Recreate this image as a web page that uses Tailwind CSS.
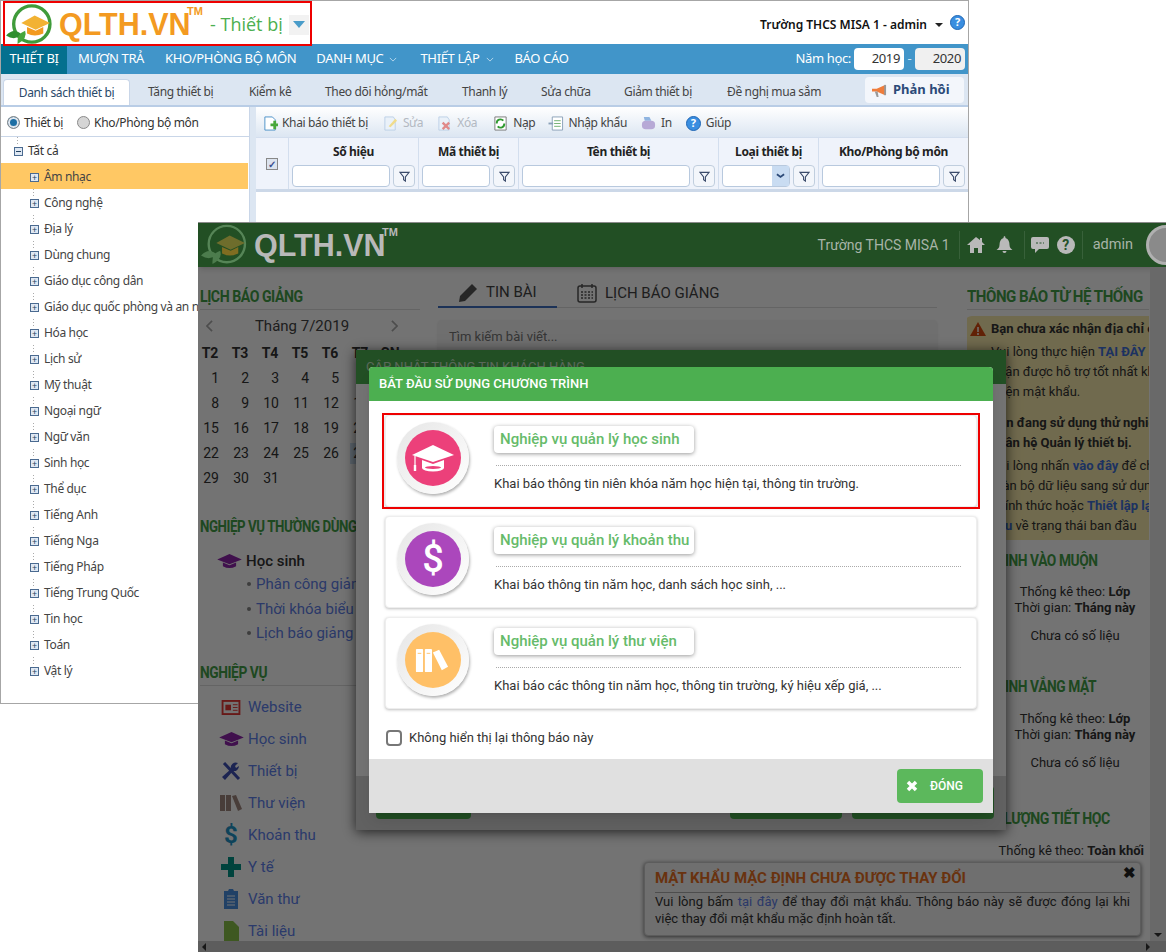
<!DOCTYPE html>
<html lang="en">
<head>
    <meta charset="UTF-8">
    <title>QLTH.VN</title>
    <script src="https://cdn.jsdelivr.net/npm/@tailwindcss/browser@4"></script>
</head>
<body class="bg-white">
<div class="relative w-[1166px] h-[952px] overflow-hidden bg-white">

    <!-- back window: Thiet bi -->
    <div class="absolute left-0 top-0 w-[969px] h-[704px] border border-[#a6a6a6] bg-white font-['Noto_Sans',sans-serif] text-[12px] tracking-[-0.35px] text-[#444] flex flex-col overflow-hidden">
        <header class="h-[43px] flex items-center pt-[4px] pl-[3px] pr-[3px] tracking-normal">
            <svg viewBox="0 0 48 44" class="w-[48px] h-[42px] shrink-0">
                <circle cx="28" cy="21" r="19" fill="none" stroke="#3f9b3a" stroke-width="3.5"/>
                <path d="M17 20 L31 12 L47 20 L32 27Z" fill="#f2b233"/>
                <path d="M23 24 L23 31 Q31 35 40 31 L40 24 L32 28Z" fill="#f29a1f"/>
                <path d="M1 33 Q9 24 18 32 Q10 39 1 33Z" fill="#2f8f2f"/>
                <path d="M13 42 Q12 31 21 28 Q24 36 13 42Z" fill="#46a63c"/>
            </svg>
            <div class="relative ml-[7px] font-['Liberation_Sans',sans-serif] font-bold text-[#f39a21] text-[30.5px] leading-none w-[151px]">QLTH.VN<span class="absolute left-[128px] top-[-3px] text-[11px]">TM</span></div>
            <span class="text-[18px] text-[#4caf50] font-['Open_Sans',sans-serif]">- Thiết bị</span>
            <span class="ml-[6px] w-[20px] h-[20px] bg-[#f2f2f2] flex items-center justify-center"><span class="w-0 h-0 border-x-[6px] border-x-transparent border-t-[7px] border-t-[#4a9cc9]"></span></span>
            <div class="ml-auto flex items-center">
                <span class="text-[12px] font-semibold text-[#111]">Trường THCS MISA 1 - admin</span>
                <span class="ml-[8px] w-0 h-0 border-x-[4px] border-x-transparent border-t-[4px] border-t-[#222]"></span>
                <span class="ml-[7px] w-[15px] h-[15px] rounded-full bg-[#3a8ee0] border border-[#1f66b5] text-white text-[11px] font-bold flex items-center justify-center mb-[4px]">?</span>
            </div>
        </header>

        <nav class="h-[30px] bg-[#4195c9] flex items-center text-white text-[13px] shrink-0">
            <a class="h-full w-[66px] bg-[#04708f] flex items-center justify-center">THIẾT BỊ</a>
            <a class="ml-[11px]">MƯỢN TRẢ</a>
            <a class="ml-[21px]">KHO/PHÒNG BỘ MÔN</a>
            <a class="ml-[20px]">DANH MỤC</a>
            <svg viewBox="0 0 10 6" class="w-[8px] h-[5px] ml-[6px]"><path d="M1 1l4 4 4-4" fill="none" stroke="#cfe4f2"/></svg>
            <a class="ml-[23px]">THIẾT LẬP</a>
            <svg viewBox="0 0 10 6" class="w-[8px] h-[5px] ml-[7px]"><path d="M1 1l4 4 4-4" fill="none" stroke="#cfe4f2"/></svg>
            <a class="ml-[20px]">BÁO CÁO</a>
            <div class="ml-auto mr-[3px] flex items-center">
                <span class="mr-[3px]">Năm học:</span>
                <span class="w-[50px] h-[22px] bg-white text-[#333] rounded-sm flex items-center justify-end pr-[4px]">2019</span>
                <span class="w-[11px] text-center text-[#cfe4f2]">-</span>
                <span class="w-[50px] h-[22px] bg-[#f0f0f0] text-[#333] rounded-sm flex items-center justify-end pr-[4px]">2020</span>
            </div>
        </nav>

        <div class="h-[33px] bg-[#dce6f2] border-b-2 border-[#b9cde6] flex items-end shrink-0 relative">
            <span class="ml-[2px] w-[127px] h-[26px] bg-white rounded-t-sm border border-b-0 border-[#c9d6e8] flex items-center justify-center text-[#2a4a6a]">Danh sách thiết bị</span>
            <span class="absolute left-[147px] top-[9px]">Tăng thiết bị</span>
            <span class="absolute left-[248px] top-[9px]">Kiểm kê</span>
            <span class="absolute left-[324px] top-[9px]">Theo dõi hỏng/mất</span>
            <span class="absolute left-[461px] top-[9px]">Thanh lý</span>
            <span class="absolute left-[540px] top-[9px]">Sửa chữa</span>
            <span class="absolute left-[623px] top-[9px]">Giảm thiết bị</span>
            <span class="absolute left-[726px] top-[9px]">Đề nghị mua sắm</span>
            <span class="absolute left-[864px] top-[3px] w-[99px] h-[26px] bg-[#f3f6fb] rounded-sm flex items-center pl-[6px] gap-[5px] font-bold text-[13px] tracking-normal text-[#2b4a78]">
                <svg viewBox="0 0 18 16" class="w-[17px] h-[15px] shrink-0"><path d="M1 6h5l9-4v11L6 9H1z" fill="#ef7d3c"/><path d="M15 2v11" stroke="#999" stroke-width="2"/><path d="M4 9l2 6h2L7 9z" fill="#999"/></svg>
                Phản hồi
            </span>
        </div>

        <div class="flex flex-1 min-h-0">
            <aside class="relative w-[249px] border-r border-[#c9d6e8] shrink-0 text-[#333]">
                <span class="absolute left-[16px] top-[30px] w-px h-[7px] bg-[repeating-linear-gradient(#aaa_0_1px,transparent_1px_3px)]"></span>
                <span class="absolute left-[32px] top-[82px] w-px h-[494px] bg-[repeating-linear-gradient(#aaa_0_1px,transparent_1px_3px,#aaa_3px_4px,transparent_4px_6px,#aaa_6px_7px,transparent_7px_26px)]"></span>
                <div class="h-[30px] border-b border-[#c9d6e8] flex items-center pl-[6px] pt-[2px]">
                    <span class="w-[13px] h-[13px] rounded-full border border-[#8a8a8a] bg-[#1d6fa5] shadow-[inset_0_0_0_2px_#dfe6ee]"></span>
                    <span class="ml-[4px]">Thiết bị</span>
                    <span class="ml-[14px] w-[13px] h-[13px] rounded-full border border-[#8a8a8a] bg-[#d5d5d5]"></span>
                    <span class="ml-[4px]">Kho/Phòng bộ môn</span>
                </div>
                <div class="h-[26px] flex items-center pl-[13px] pt-[2px]"><span class="w-[9px] h-[9px] border border-[#4a6a90] bg-[#dfe8f3] flex items-center justify-center"><span class="w-[5px] h-px bg-[#22415f]"></span></span><span class="ml-[5px]">Tất cả</span></div>
                <div class="text-[#444]">
                    <div class="h-[26px] flex items-center pl-[29px] pt-[2px] bg-[#ffc864] mr-px"><span class="relative w-[9px] h-[9px] border border-[#4a6a90] bg-[#dfe8f3] flex items-center justify-center text-[9px] leading-none text-[#22415f]">+</span><span class="ml-[5px]">Âm nhạc</span></div>
                    <div class="h-[26px] flex items-center pl-[29px] pt-[2px]"><span class="w-[9px] h-[9px] border border-[#4a6a90] bg-[#dfe8f3] flex items-center justify-center text-[9px] leading-none text-[#22415f]">+</span><span class="ml-[5px]">Công nghệ</span></div>
                    <div class="h-[26px] flex items-center pl-[29px] pt-[2px]"><span class="w-[9px] h-[9px] border border-[#4a6a90] bg-[#dfe8f3] flex items-center justify-center text-[9px] leading-none text-[#22415f]">+</span><span class="ml-[5px]">Địa lý</span></div>
                    <div class="h-[26px] flex items-center pl-[29px] pt-[2px]"><span class="w-[9px] h-[9px] border border-[#4a6a90] bg-[#dfe8f3] flex items-center justify-center text-[9px] leading-none text-[#22415f]">+</span><span class="ml-[5px]">Dùng chung</span></div>
                    <div class="h-[26px] flex items-center pl-[29px] pt-[2px]"><span class="w-[9px] h-[9px] border border-[#4a6a90] bg-[#dfe8f3] flex items-center justify-center text-[9px] leading-none text-[#22415f]">+</span><span class="ml-[5px]">Giáo dục công dân</span></div>
                    <div class="h-[26px] flex items-center pl-[29px] pt-[2px]"><span class="w-[9px] h-[9px] border border-[#4a6a90] bg-[#dfe8f3] flex items-center justify-center text-[9px] leading-none text-[#22415f]">+</span><span class="ml-[5px] whitespace-nowrap">Giáo dục quốc phòng và an ninh</span></div>
                    <div class="h-[26px] flex items-center pl-[29px] pt-[2px]"><span class="w-[9px] h-[9px] border border-[#4a6a90] bg-[#dfe8f3] flex items-center justify-center text-[9px] leading-none text-[#22415f]">+</span><span class="ml-[5px]">Hóa học</span></div>
                    <div class="h-[26px] flex items-center pl-[29px] pt-[2px]"><span class="w-[9px] h-[9px] border border-[#4a6a90] bg-[#dfe8f3] flex items-center justify-center text-[9px] leading-none text-[#22415f]">+</span><span class="ml-[5px]">Lịch sử</span></div>
                    <div class="h-[26px] flex items-center pl-[29px] pt-[2px]"><span class="w-[9px] h-[9px] border border-[#4a6a90] bg-[#dfe8f3] flex items-center justify-center text-[9px] leading-none text-[#22415f]">+</span><span class="ml-[5px]">Mỹ thuật</span></div>
                    <div class="h-[26px] flex items-center pl-[29px] pt-[2px]"><span class="w-[9px] h-[9px] border border-[#4a6a90] bg-[#dfe8f3] flex items-center justify-center text-[9px] leading-none text-[#22415f]">+</span><span class="ml-[5px]">Ngoại ngữ</span></div>
                    <div class="h-[26px] flex items-center pl-[29px] pt-[2px]"><span class="w-[9px] h-[9px] border border-[#4a6a90] bg-[#dfe8f3] flex items-center justify-center text-[9px] leading-none text-[#22415f]">+</span><span class="ml-[5px]">Ngữ văn</span></div>
                    <div class="h-[26px] flex items-center pl-[29px] pt-[2px]"><span class="w-[9px] h-[9px] border border-[#4a6a90] bg-[#dfe8f3] flex items-center justify-center text-[9px] leading-none text-[#22415f]">+</span><span class="ml-[5px]">Sinh học</span></div>
                    <div class="h-[26px] flex items-center pl-[29px] pt-[2px]"><span class="w-[9px] h-[9px] border border-[#4a6a90] bg-[#dfe8f3] flex items-center justify-center text-[9px] leading-none text-[#22415f]">+</span><span class="ml-[5px]">Thể dục</span></div>
                    <div class="h-[26px] flex items-center pl-[29px] pt-[2px]"><span class="w-[9px] h-[9px] border border-[#4a6a90] bg-[#dfe8f3] flex items-center justify-center text-[9px] leading-none text-[#22415f]">+</span><span class="ml-[5px]">Tiếng Anh</span></div>
                    <div class="h-[26px] flex items-center pl-[29px] pt-[2px]"><span class="w-[9px] h-[9px] border border-[#4a6a90] bg-[#dfe8f3] flex items-center justify-center text-[9px] leading-none text-[#22415f]">+</span><span class="ml-[5px]">Tiếng Nga</span></div>
                    <div class="h-[26px] flex items-center pl-[29px] pt-[2px]"><span class="w-[9px] h-[9px] border border-[#4a6a90] bg-[#dfe8f3] flex items-center justify-center text-[9px] leading-none text-[#22415f]">+</span><span class="ml-[5px]">Tiếng Pháp</span></div>
                    <div class="h-[26px] flex items-center pl-[29px] pt-[2px]"><span class="w-[9px] h-[9px] border border-[#4a6a90] bg-[#dfe8f3] flex items-center justify-center text-[9px] leading-none text-[#22415f]">+</span><span class="ml-[5px]">Tiếng Trung Quốc</span></div>
                    <div class="h-[26px] flex items-center pl-[29px] pt-[2px]"><span class="w-[9px] h-[9px] border border-[#4a6a90] bg-[#dfe8f3] flex items-center justify-center text-[9px] leading-none text-[#22415f]">+</span><span class="ml-[5px]">Tin học</span></div>
                    <div class="h-[26px] flex items-center pl-[29px] pt-[2px]"><span class="w-[9px] h-[9px] border border-[#4a6a90] bg-[#dfe8f3] flex items-center justify-center text-[9px] leading-none text-[#22415f]">+</span><span class="ml-[5px]">Toán</span></div>
                    <div class="h-[26px] flex items-center pl-[29px] pt-[2px]"><span class="w-[9px] h-[9px] border border-[#4a6a90] bg-[#dfe8f3] flex items-center justify-center text-[9px] leading-none text-[#22415f]">+</span><span class="ml-[5px]">Vật lý</span></div>
                </div>
            </aside>
            <div class="w-[6px] bg-[#dce6f2] shrink-0"></div>
            <main class="flex-1 min-w-0">
                <div class="h-[30px] bg-gradient-to-b from-white to-[#dce6f2] flex items-center pl-[7px] pt-[2px]">
                    <svg viewBox="0 0 16 16" class="w-[15px] h-[15px]"><path d="M2 1h8l3 3v11H2z" fill="#fff" stroke="#4a90c8"/><path d="M8 8h3V5h3v3h2v3h-2v3h-3v-3H8z" fill="#47a83a"/></svg>
                    <span class="ml-[4px]">Khai báo thiết bị</span>
                    <svg viewBox="0 0 16 16" class="ml-[15px] w-[15px] h-[15px]"><path d="M2 1h9l2 3v11H2z" fill="#eaf1f9" stroke="#bcd0e6"/><path d="M6 11l7-8 2 2-7 7z" fill="#f0dc8c"/></svg>
                    <span class="ml-[5px] text-[#b3b9c2]">Sửa</span>
                    <svg viewBox="0 0 16 16" class="ml-[14px] w-[15px] h-[15px]"><path d="M2 1h9l2 3v11H2z" fill="#eaf1f9" stroke="#bcd0e6"/><path d="M6 7l7 7M13 7l-7 7" stroke="#e08a8a" stroke-width="2.5"/></svg>
                    <span class="ml-[5px] text-[#b3b9c2]">Xóa</span>
                    <svg viewBox="0 0 16 16" class="ml-[16px] w-[15px] h-[15px]"><path d="M2 1h12v14H2z" fill="#fff" stroke="#777"/><path d="M11 5A4 4 0 0 0 4 8M5 11a4 4 0 0 0 7-3" fill="none" stroke="#2f9a2f" stroke-width="2"/></svg>
                    <span class="ml-[5px]">Nạp</span>
                    <svg viewBox="0 0 16 16" class="ml-[13px] w-[16px] h-[15px]"><path d="M4 1h11v14H4z" fill="#fff" stroke="#8aa0b8"/><path d="M6 5h7M6 8h7M6 11h7" stroke="#6fae6f"/><path d="M0 8h5" stroke="#8aa0b8" stroke-width="2"/></svg>
                    <span class="ml-[4px]">Nhập khẩu</span>
                    <svg viewBox="0 0 16 16" class="ml-[14px] w-[15px] h-[15px]"><path d="M3 1h6l2 4H4z" fill="#8fb4e0"/><rect x="1" y="5" width="14" height="9" rx="4" fill="#b7a9d6"/></svg>
                    <span class="ml-[5px]">In</span>
                    <span class="ml-[14px] w-[15px] h-[15px] rounded-full bg-[#3a8ee0] border border-[#1f66b5] text-white text-[11px] font-bold flex items-center justify-center">?</span>
                    <span class="ml-[5px]">Giúp</span>
                </div>
                <div class="h-[55px] bg-[#eff3fb] border-y border-[#d3deee] border-b-[3px] border-b-[#ccd8e8] flex text-[#222] font-bold">
                    <div class="w-[33px] border-r border-[#d3deee] flex items-center justify-center"><span class="w-[12px] h-[12px] border border-[#888] bg-[#dce3ee] text-[#3a4f90] text-[10px] leading-none flex items-center justify-center">✓</span></div>
                    <div class="w-[130px] border-r border-[#d3deee] flex flex-col items-center pt-[5px] px-[3px]">
                        <span>Số hiệu</span>
                        <div class="mt-[4px] flex gap-[3px] w-full"><span class="flex-1 h-[22px] bg-white border border-[#b8c9de] rounded-sm"></span><span class="w-[22px] h-[22px] bg-[#f3f6fb] border border-[#c0cede] rounded-sm flex items-center justify-center"><svg viewBox="0 0 12 12" class="w-[11px] h-[11px]"><path d="M1 1.5h10L7 6.5V11L5 9.5v-3z" fill="none" stroke="#3a4a6a" stroke-width="1.2"/></svg></span></div>
                    </div>
                    <div class="w-[100px] border-r border-[#d3deee] flex flex-col items-center pt-[5px] px-[3px]">
                        <span>Mã thiết bị</span>
                        <div class="mt-[4px] flex gap-[3px] w-full"><span class="flex-1 h-[22px] bg-white border border-[#b8c9de] rounded-sm"></span><span class="w-[22px] h-[22px] bg-[#f3f6fb] border border-[#c0cede] rounded-sm flex items-center justify-center"><svg viewBox="0 0 12 12" class="w-[11px] h-[11px]"><path d="M1 1.5h10L7 6.5V11L5 9.5v-3z" fill="none" stroke="#3a4a6a" stroke-width="1.2"/></svg></span></div>
                    </div>
                    <div class="w-[200px] border-r border-[#d3deee] flex flex-col items-center pt-[5px] px-[3px]">
                        <span>Tên thiết bị</span>
                        <div class="mt-[4px] flex gap-[3px] w-full"><span class="flex-1 h-[22px] bg-white border border-[#b8c9de] rounded-sm"></span><span class="w-[22px] h-[22px] bg-[#f3f6fb] border border-[#c0cede] rounded-sm flex items-center justify-center"><svg viewBox="0 0 12 12" class="w-[11px] h-[11px]"><path d="M1 1.5h10L7 6.5V11L5 9.5v-3z" fill="none" stroke="#3a4a6a" stroke-width="1.2"/></svg></span></div>
                    </div>
                    <div class="w-[100px] border-r border-[#d3deee] flex flex-col items-center pt-[5px] px-[3px]">
                        <span>Loại thiết bị</span>
                        <div class="mt-[4px] flex gap-[3px] w-full"><span class="flex-1 h-[22px] bg-white border border-[#b8c9de] rounded-sm flex justify-end"><span class="w-[17px] h-full bg-[#c9dcf2] flex items-center justify-center"><svg viewBox="0 0 10 6" class="w-[9px] h-[6px]"><path d="M1 1l4 3 4-3" fill="none" stroke="#2c4a78" stroke-width="2"/></svg></span></span><span class="w-[22px] h-[22px] bg-[#f3f6fb] border border-[#c0cede] rounded-sm flex items-center justify-center"><svg viewBox="0 0 12 12" class="w-[11px] h-[11px]"><path d="M1 1.5h10L7 6.5V11L5 9.5v-3z" fill="none" stroke="#3a4a6a" stroke-width="1.2"/></svg></span></div>
                    </div>
                    <div class="flex-1 flex flex-col items-center pt-[5px] px-[3px]">
                        <span>Kho/Phòng bộ môn</span>
                        <div class="mt-[4px] flex gap-[3px] w-full"><span class="flex-1 h-[22px] bg-white border border-[#b8c9de] rounded-sm"></span><span class="w-[22px] h-[22px] bg-[#f3f6fb] border border-[#c0cede] rounded-sm flex items-center justify-center"><svg viewBox="0 0 12 12" class="w-[11px] h-[11px]"><path d="M1 1.5h10L7 6.5V11L5 9.5v-3z" fill="none" stroke="#3a4a6a" stroke-width="1.2"/></svg></span></div>
                    </div>
                </div>
            </main>
        </div>
        <span class="absolute left-[2px] top-0 w-[309px] h-[45px] border-2 border-[#ee0000] pointer-events-none"></span>
    </div>

    <!-- front window: QLTH dashboard with dialogs -->
    <div class="absolute left-[198px] top-[222px] w-[968px] h-[730px] bg-white border-t border-[#8a8a8a] overflow-hidden font-['Roboto',sans-serif] text-[#333] flex flex-col">
        <header class="h-[44px] bg-[#4caf50] shadow-md flex items-center text-white shrink-0">
            <svg viewBox="0 0 48 44" class="w-[48px] h-[42px] ml-[1px] shrink-0 relative z-10 opacity-70">
                <circle cx="28" cy="21" r="19" fill="none" stroke="#6d9c6d" stroke-width="2.5"/>
                <path d="M17 20 L31 12 L47 20 L32 27Z" fill="#8f7a30"/>
                <path d="M23 24 L23 31 Q31 35 40 31 L40 24 L32 28Z" fill="#a87a20"/>
                <path d="M1 33 Q9 24 18 32 Q10 39 1 33Z" fill="#5f8f5f"/>
                <path d="M13 42 Q12 31 21 28 Q24 36 13 42Z" fill="#5f8f5f"/>
            </svg>
            <div class="relative z-10 ml-[7px] font-['Liberation_Sans',sans-serif] font-bold text-[30.5px] leading-none text-[#b9b9b9]">QLTH.VN<span class="absolute left-[128px] top-[-3px] text-[11px]">TM</span></div>
            <div class="relative z-10 ml-auto flex items-center pr-[2px] text-[#a8b4a8]">
                <span class="text-[14px]">Trường THCS MISA 1</span>
                <span class="ml-[9px] w-px h-[28px] bg-white/10"></span>
                <svg viewBox="0 0 18 16" class="ml-[7px] w-[18px] h-[16px]"><path d="M9 0L0 8h3v8h4v-5h4v5h4V8h3l-3-3V1h-2v2z" fill="#b9b9b9"/></svg>
                <svg viewBox="0 0 16 18" class="ml-[11px] w-[17px] h-[18px]"><path d="M8 0a2 2 0 0 0-1 2C4 3 3 6 3 9c0 3-2 4-3 5h16c-1-1-3-2-3-5 0-3-1-6-4-7a2 2 0 0 0-1-2zM6 15a2 2 0 0 0 4 0z" fill="#b9b9b9"/></svg>
                <span class="ml-[11px] w-px h-[28px] bg-white/10"></span>
                <svg viewBox="0 0 18 16" class="ml-[6px] w-[18px] h-[16px]"><path d="M2 0h14a2 2 0 0 1 2 2v8a2 2 0 0 1-2 2H8l-4 4v-4H2a2 2 0 0 1-2-2V2a2 2 0 0 1 2-2z" fill="#b9b9b9"/><path d="M5 6h8" stroke="#25522a" stroke-dasharray="2 1.5"/></svg>
                <span class="ml-[8px] w-[18px] h-[18px] rounded-full bg-[#b9b9b9] text-[#25522a] text-[14px] font-bold flex items-center justify-center">?</span>
                <span class="ml-[7px] w-px h-[28px] bg-white/10"></span>
                <span class="ml-[10px] text-[14.5px]">admin</span>
                <span class="ml-[13px] w-[40px] h-[40px] rounded-full bg-[#8a8a8a] border-[3px] border-[#b0b0b0] mr-[-22px]"></span>
            </div>
        </header>

        <div class="flex flex-1 min-h-0">
            <div class="flex-1 flex min-w-0">
                <!-- left column -->
                <section class="w-[220px] ml-[2px] shrink-0">
                    <h2 class="mt-[20px] h-[21px] border-b border-[#ddd] font-bold text-[16px] leading-[20px] tracking-[-0.5px] text-[#43a047] box-content pb-[1px] whitespace-nowrap"><span class="inline-block origin-left scale-x-[0.88]">LỊCH BÁO GIẢNG</span></h2>
                    <div class="mt-[4px] h-[24px] flex items-center justify-between px-[6px] text-[#bbb]">
                        <svg viewBox="0 0 8 14" class="w-[7px] h-[12px]"><path d="M7 1L1 7l6 6" fill="none" stroke="#aaa" stroke-width="2"/></svg>
                        <span class="text-[15px] text-[#444]">Tháng 7/2019</span>
                        <svg viewBox="0 0 8 14" class="w-[7px] h-[12px] mr-[16px]"><path d="M1 1l6 6-6 6" fill="none" stroke="#aaa" stroke-width="2"/></svg>
                    </div>
                    <div class="mt-[3px] grid grid-cols-[repeat(7,30px)] auto-rows-[25px] items-center text-[14px] text-[#333]">
                        <b class="text-center pr-[10px]">T2</b><b class="text-center pr-[10px]">T3</b><b class="text-center pr-[10px]">T4</b><b class="text-center pr-[10px]">T5</b><b class="text-center pr-[10px]">T6</b><b class="text-center pr-[10px]">T7</b><b class="text-center pr-[10px]">CN</b>
                        <span class="text-right pr-[11px]">1</span><span class="text-right pr-[11px]">2</span><span class="text-right pr-[11px]">3</span><span class="text-right pr-[11px]">4</span><span class="text-right pr-[11px]">5</span><span class="text-right pr-[11px]">6</span><span class="text-right pr-[11px]">7</span>
                        <span class="text-right pr-[11px]">8</span><span class="text-right pr-[11px]">9</span><span class="text-right pr-[11px]">10</span><span class="text-right pr-[11px]">11</span><span class="text-right pr-[11px]">12</span><span class="text-right pr-[11px]">13</span><span class="text-right pr-[11px]">14</span>
                        <span class="text-right pr-[11px]">15</span><span class="text-right pr-[11px]">16</span><span class="text-right pr-[11px]">17</span><span class="text-right pr-[11px]">18</span><span class="text-right pr-[11px]">19</span><span class="text-right pr-[11px]">20</span><span class="text-right pr-[11px]">21</span>
                        <span class="text-right pr-[11px]">22</span><span class="text-right pr-[11px]">23</span><span class="text-right pr-[11px]">24</span><span class="text-right pr-[11px]">25</span><span class="text-right pr-[11px]">26</span><span class="text-right pr-[11px] bg-[#cfe2f5]">27</span><span class="text-right pr-[11px]">28</span>
                        <span class="text-right pr-[11px]">29</span><span class="text-right pr-[11px]">30</span><span class="text-right pr-[11px]">31</span>
                    </div>
                    <h2 class="mt-[26px] font-bold text-[16px] leading-[20px] tracking-[-0.5px] text-[#43a047] whitespace-nowrap"><span class="inline-block origin-left scale-x-[0.83]">NGHIỆP VỤ THƯỜNG DÙNG</span></h2>
                    <div class="mt-[14px] ml-[16px] h-[20px] flex items-center font-medium text-[15px]">
                        <svg viewBox="0 0 28 18" class="w-[27px] h-[17px]"><path d="M14 1L1 7l13 5 13-5z" fill="#8e24aa"/><path d="M7 10v4q7 4 14 0v-4l-7 3z" fill="#8e24aa"/></svg>
                        <span class="ml-[3px]">Học sinh</span>
                    </div>
                    <ul class="mt-[1px] ml-[56px] text-[15px] text-[#5f7fe8] whitespace-nowrap relative">
                        <li class="h-[25px] leading-[25px] relative">Phân công giảng dạy<span class="absolute left-[-9px] top-[10px] w-[4px] h-[4px] rounded-full bg-[#888]"></span></li>
                        <li class="h-[24px] leading-[24px] relative">Thời khóa biểu<span class="absolute left-[-9px] top-[10px] w-[4px] h-[4px] rounded-full bg-[#888]"></span></li>
                        <li class="h-[25px] leading-[25px] relative">Lịch báo giảng<span class="absolute left-[-9px] top-[10px] w-[4px] h-[4px] rounded-full bg-[#888]"></span></li>
                    </ul>
                    <h2 class="mt-[17px] h-[21px] border-b border-[#ddd] font-bold text-[16px] leading-[20px] tracking-[-0.5px] text-[#43a047] box-content pb-[1px] whitespace-nowrap"><span class="inline-block origin-left scale-x-[0.86]">NGHIỆP VỤ</span></h2>
                    <ul class="mt-[5px] text-[15px] text-[#6082ee]">
                        <li class="h-[32px] flex items-center"><span class="w-[48px] flex justify-center pl-[14px]"><svg viewBox="0 0 20 16" class="w-[20px] h-[15px]"><rect x="1" y="1" width="18" height="14" fill="none" stroke="#e53935" stroke-width="2"/><rect x="4" y="5" width="6" height="6" fill="#e53935"/><path d="M12 5h5M12 8h5M12 11h5" stroke="#e53935"/></svg></span>Website</li>
                        <li class="h-[32px] flex items-center"><span class="w-[48px] flex justify-center pl-[14px]"><svg viewBox="0 0 28 18" class="w-[27px] h-[17px]"><path d="M14 1L1 7l13 5 13-5z" fill="#8e24aa"/><path d="M7 10v4q7 4 14 0v-4l-7 3z" fill="#8e24aa"/></svg></span>Học sinh</li>
                        <li class="h-[32px] flex items-center"><span class="w-[48px] flex justify-center pl-[14px]"><svg viewBox="0 0 20 20" class="w-[20px] h-[20px]"><path d="M3 2l15 16" stroke="#3f51b5" stroke-width="3"/><path d="M17 2l-3 3 1 2 3-2a5 5 0 0 1-6 5L4 19l-3-3 9-8a5 5 0 0 1 7-6z" fill="#3f51b5"/></svg></span>Thiết bị</li>
                        <li class="h-[32px] flex items-center"><span class="w-[48px] flex justify-center pl-[14px]"><svg viewBox="0 0 22 16" class="w-[22px] h-[16px]"><rect x="0" y="0" width="5" height="16" fill="#a1887f"/><rect x="6" y="0" width="5" height="16" fill="#a1887f"/><path d="M12 1l4-1 6 14-4 2z" fill="#a1887f"/></svg></span>Thư viện</li>
                        <li class="h-[32px] flex items-center"><span class="w-[48px] flex justify-center pl-[14px] text-[24px] font-bold text-[#2196c8]">$</span>Khoản thu</li>
                        <li class="h-[32px] flex items-center"><span class="w-[48px] flex justify-center pl-[14px]"><svg viewBox="0 0 20 20" class="w-[20px] h-[20px]"><path d="M7 0h6v7h7v6h-7v7H7v-7H0V7h7z" fill="#009688"/></svg></span>Y tế</li>
                        <li class="h-[32px] flex items-center"><span class="w-[48px] flex justify-center pl-[14px]"><svg viewBox="0 0 16 20" class="w-[16px] h-[20px]"><path d="M1 2h4l1-2h4l1 2h4v18H1z" fill="#4a90e2"/><path d="M4 7h8M4 10h8M4 13h8M4 16h8" stroke="#fff"/></svg></span>Văn thư</li>
                        <li class="h-[32px] flex items-center"><span class="w-[48px] flex justify-center pl-[14px]"><svg viewBox="0 0 15 20" class="w-[15px] h-[20px]"><path d="M0 0h9l6 6v14H0z" fill="#8bc34a"/></svg></span>Tài liệu</li>
                    </ul>
                </section>

                <!-- middle column -->
                <section class="w-[499px] ml-[18px] shrink-0">
                    <div class="mt-[11px] h-[30px] border-b border-[#ddd] flex text-[15px] text-[#444]">
                        <div class="w-[119px] h-[30px] border-b-2 border-[#3f6fc0] flex items-center pl-[20px] pt-[1px]">
                            <svg viewBox="0 0 20 20" class="w-[20px] h-[20px]"><path d="M14 1l5 5L7 18l-6 1 1-6z" fill="#555"/></svg>
                            <span class="ml-[8px]">TIN BÀI</span>
                        </div>
                        <div class="flex items-center ml-[20px] pt-[1px]">
                            <svg viewBox="0 0 20 20" class="w-[20px] h-[20px]"><rect x="1" y="3" width="18" height="16" rx="2" fill="none" stroke="#555" stroke-width="1.5"/><path d="M5 1v4M15 1v4" stroke="#555" stroke-width="1.5"/><path d="M4 9h12M4 12h12M4 15h12" stroke="#555" stroke-width="1.5" stroke-dasharray="2 1.5"/></svg>
                            <span class="ml-[8px]">LỊCH BÁO GIẢNG</span>
                        </div>
                    </div>
                    <div class="mt-[12px] h-[60px] bg-[#f5f5f5] rounded shadow pl-[11px] pt-[7px] text-[13px] text-[#777]">Tìm kiếm bài viết...</div>
                </section>

                <!-- right column -->
                <section class="w-[182px] ml-[30px] shrink-0 overflow-hidden text-[13px] text-[#333]">
                    <h2 class="mt-[20px] h-[21px] border-b border-[#ddd] font-bold text-[16px] leading-[20px] tracking-[-0.5px] text-[#43a047] whitespace-nowrap box-content pb-[1px]"><span class="inline-block origin-left scale-x-[0.94]">THÔNG BÁO TỪ HỆ THỐNG</span></h2>
                    <div class="mt-[6px] h-[224px] ml-[-3px] pl-[6px] bg-[#f9ebad] rounded-tl-lg whitespace-nowrap leading-[20px]">
                        <div class="pt-[3px] h-[23px] flex items-center font-bold">
                            <svg viewBox="0 0 16 14" class="w-[16px] h-[14px] shrink-0"><path d="M8 0l8 14H0z" fill="#d84b0f"/><path d="M8 5v5M8 11v2" stroke="#fff" stroke-width="1.5"/></svg>
                            <span class="ml-[5px]">Bạn chưa xác nhận địa chỉ email</span>
                        </div>
                        <p class="mt-[3px] pl-[21px]">Vui lòng thực hiện <b class="text-[#3f6fd8]">TẠI ĐÂY</b></p>
                        <p class="pl-[21px]">nhận được hỗ trợ tốt nhất khi</p>
                        <p class="pl-[21px]">thiện mật khẩu.</p>
                        <p class="mt-[11px] pl-[21px] font-bold">Bạn đang sử dụng thử nghiệm</p>
                        <p class="pl-[21px] font-bold">phân hệ Quản lý thiết bị.</p>
                        <p class="mt-[3px] pl-[21px]">Vui lòng nhấn <b class="text-[#3f6fd8]">vào đây</b> để chuyển</p>
                        <p class="pl-[21px]">toàn bộ dữ liệu sang sử dụng</p>
                        <p class="pl-[21px]">chính thức hoặc <b class="text-[#3f6fd8]">Thiết lập lại</b></p>
                        <p class="pl-[21px]"><b class="text-[#3f6fd8]">liệu</b> về trạng thái ban đầu</p>
                    </div>
                    <h2 class="mt-[11px] font-bold text-[16px] leading-[20px] tracking-[-0.5px] text-[#43a047] whitespace-nowrap"><span class="inline-block origin-left scale-x-[0.86]">HỌC SINH VÀO MUỘN</span></h2>
                    <div class="mt-[13px] text-center leading-[16px] pl-[34px]">
                        <p>Thống kê theo: <b>Lớp</b></p>
                        <p>Thời gian: <b>Tháng này</b></p>
                        <p class="mt-[12px]">Chưa có số liệu</p>
                    </div>
                    <h2 class="mt-[33px] font-bold text-[16px] leading-[20px] tracking-[-0.5px] text-[#43a047] whitespace-nowrap"><span class="inline-block origin-left scale-x-[0.86]">HỌC SINH VẮNG MẶT</span></h2>
                    <div class="mt-[14px] text-center leading-[16px] pl-[34px]">
                        <p>Thống kê theo: <b>Lớp</b></p>
                        <p>Thời gian: <b>Tháng này</b></p>
                        <p class="mt-[12px]">Chưa có số liệu</p>
                    </div>
                    <h2 class="mt-[38px] font-bold text-[16px] leading-[20px] tracking-[-0.5px] text-[#43a047] whitespace-nowrap pl-[37px]"><span class="inline-block origin-left scale-x-[0.88]">LƯỢNG TIẾT HỌC</span></h2>
                    <p class="mt-[12px] pr-[5px] text-right whitespace-nowrap">Thống kê theo: <b>Toàn khối</b></p>
                </section>
            </div>
            <!-- vertical scrollbar -->
            <div class="w-[16px] bg-[#e8e8e8] shrink-0 flex flex-col items-center justify-end pb-[4px]"><span class="w-0 h-0 border-x-[4px] border-x-transparent border-t-[4px] border-t-[#333]"></span></div>
        </div>
        <!-- horizontal scrollbar -->
        <div class="h-[11px] bg-[#cfcfcf] shrink-0 flex items-center justify-between px-[4px]">
            <span class="w-0 h-0 border-y-[4px] border-y-transparent border-r-[4px] border-r-[#333]"></span>
            <span class="w-0 h-0 border-y-[4px] border-y-transparent border-l-[4px] border-l-[#333] mr-[12px]"></span>
        </div>

        <!-- toast -->
        <div class="absolute left-[446px] top-[639px] w-[497px] h-[74px] bg-[#f5f5f5] border border-[#ccc] rounded-sm shadow-[0_1px_4px_rgba(0,0,0,.6)] px-[10px] pt-[3px] text-[13px]">
            <div class="h-[27px] border-b border-[#aaa] font-bold text-[15px] leading-[25px] text-[#e8701f] relative whitespace-nowrap">MẬT KHẨU MẶC ĐỊNH CHƯA ĐƯỢC THAY ĐỔI<span class="absolute right-[-6px] top-[-5px] text-[#222] text-[15px]">✖</span></div>
            <p class="leading-[17px] text-justify">Vui lòng bấm <span class="text-[#5f7fe8]">tại đây</span> để thay đổi mật khẩu. Thông báo này sẽ được đóng lại khi việc thay đổi mật khẩu mặc định hoàn tất.</p>
        </div>

        <!-- dialog behind the overlay -->
        <div class="absolute left-[158px] top-[127px] w-[650px] h-[480px] bg-white shadow-[0_2px_12px_rgba(0,0,0,.7)] flex flex-col">
            <div class="h-[34px] bg-[#4caf50] text-white/70 text-[13px] leading-[34px] pl-[10px] shrink-0">CẬP NHẬT THÔNG TIN KHÁCH HÀNG</div>
            <div class="flex-1"></div>
            <div class="h-[54px] bg-[#d8d8d8] flex items-start pt-[10px] pl-[20px] pr-[12px]">
                <span class="w-[95px] h-[33px] bg-[#4caf50] rounded-sm"></span>
                <span class="ml-auto w-[112px] h-[33px] bg-[#4caf50] rounded-sm"></span>
                <span class="ml-[10px] w-[142px] h-[33px] bg-[#4caf50] rounded-sm"></span>
            </div>
        </div>

        <div class="absolute inset-0 bg-black/55"></div>

        <!-- start dialog -->
        <div class="absolute z-20 left-[171px] top-[144px] w-[624px] h-[446px] bg-white rounded-t-sm flex flex-col shadow-lg">
            <div class="h-[34px] bg-[#4caf50] rounded-t-sm text-white text-[13px] font-medium leading-[34px] pl-[10px] shrink-0">BẮT ĐẦU SỬ DỤNG CHƯƠNG TRÌNH</div>
            <div class="flex-1 px-[16px] pt-[14px] text-[13px] text-[#333]">

                <div class="relative h-[92px] bg-white rounded border border-[#eee] shadow-[0_1px_3px_rgba(0,0,0,.25)] flex">
                    <span class="absolute left-[-4px] top-[-3px] right-[-4px] bottom-[-3px] border-2 border-[#ee0000]"></span>
                    <div class="ml-[11px] mt-[6px] w-[72px] h-[72px] rounded-full bg-gradient-to-br from-[#e6e6e6] to-white shadow-[1px_2px_3px_rgba(0,0,0,.3)] flex items-center justify-center shrink-0">
                        <span class="w-[56px] h-[56px] rounded-full bg-[#ec407a] flex items-center justify-center">
                            <svg viewBox="0 0 42 27" class="w-[42px] h-[27px]"><path d="M21 0L42 10 21 17 0 10z" fill="#fff"/><path d="M10 15L21 19 32 15V23A11 3.5 0 0 1 10 23z" fill="#fff"/><ellipse cx="21" cy="22.5" rx="8" ry="1.5" fill="#ec407a"/><path d="M3 11V20" stroke="#fff" stroke-width="1.2"/><rect x="1.8" y="20" width="2.4" height="6" fill="#fff"/></svg>
                        </span>
                    </div>
                    <div class="ml-[25px] flex-1 pr-[15px] pt-[10px]">
                        <h3 class="w-[200px] h-[27px] bg-white rounded-sm shadow-[0_1px_4px_rgba(0,0,0,.4)] pl-[6px] text-[15px] font-medium leading-[26px] text-[#66bb6a] whitespace-nowrap">Nghiệp vụ quản lý học sinh</h3>
                        <div class="mt-[12px] ml-[2px] border-t border-dotted border-[#aaa]"></div>
                        <p class="mt-[8px] whitespace-nowrap">Khai báo thông tin niên khóa năm học hiện tại, thông tin trường.</p>
                    </div>
                </div>

                <div class="mt-[9px] h-[92px] bg-white rounded border border-[#eee] shadow-[0_1px_3px_rgba(0,0,0,.25)] flex">
                    <div class="ml-[11px] mt-[6px] w-[72px] h-[72px] rounded-full bg-gradient-to-br from-[#e6e6e6] to-white shadow-[1px_2px_3px_rgba(0,0,0,.3)] flex items-center justify-center shrink-0">
                        <span class="w-[56px] h-[56px] rounded-full bg-[#ab47bc] flex items-center justify-center text-white text-[38px] font-medium leading-none">$</span>
                    </div>
                    <div class="ml-[25px] flex-1 pr-[15px] pt-[10px]">
                        <h3 class="w-[200px] h-[27px] bg-white rounded-sm shadow-[0_1px_4px_rgba(0,0,0,.4)] pl-[6px] text-[15px] font-medium leading-[26px] text-[#66bb6a] whitespace-nowrap">Nghiệp vụ quản lý khoản thu</h3>
                        <div class="mt-[12px] ml-[2px] border-t border-dotted border-[#aaa]"></div>
                        <p class="mt-[8px] whitespace-nowrap">Khai báo thông tin năm học, danh sách học sinh, ...</p>
                    </div>
                </div>

                <div class="mt-[9px] h-[92px] bg-white rounded border border-[#eee] shadow-[0_1px_3px_rgba(0,0,0,.25)] flex">
                    <div class="ml-[11px] mt-[6px] w-[72px] h-[72px] rounded-full bg-gradient-to-br from-[#e6e6e6] to-white shadow-[1px_2px_3px_rgba(0,0,0,.3)] flex items-center justify-center shrink-0">
                        <span class="w-[56px] h-[56px] rounded-full bg-[#ffc067] flex items-center justify-center">
                            <svg viewBox="0 0 36 28" class="w-[34px] h-[25px] mr-[3px]"><rect x="0" y="1" width="8" height="26" rx="1" fill="#fff"/><rect x="10" y="1" width="8" height="26" rx="1" fill="#fff"/><path d="M19 5l7-3 10 19-7 4z" fill="#fff"/><path d="M2 6h4M12 6h4" stroke="#ffc067"/></svg>
                        </span>
                    </div>
                    <div class="ml-[25px] flex-1 pr-[15px] pt-[10px]">
                        <h3 class="w-[200px] h-[27px] bg-white rounded-sm shadow-[0_1px_4px_rgba(0,0,0,.4)] pl-[6px] text-[15px] font-medium leading-[26px] text-[#66bb6a] whitespace-nowrap">Nghiệp vụ quản lý thư viện</h3>
                        <div class="mt-[12px] ml-[2px] border-t border-dotted border-[#aaa]"></div>
                        <p class="mt-[8px] whitespace-nowrap">Khai báo các thông tin năm học, thông tin trường, ký hiệu xếp giá, ...</p>
                    </div>
                </div>

                <label class="mt-[19px] ml-[1px] flex items-center">
                    <span class="w-[16px] h-[16px] border-2 border-[#777] rounded-sm bg-white"></span>
                    <span class="ml-[7px]">Không hiển thị lại thông báo này</span>
                </label>
            </div>
            <div class="h-[54px] bg-[#e0e0e0] shrink-0 flex items-start justify-end pt-[10px] pr-[10px]">
                <button class="w-[86px] h-[34px] bg-[#5cb85c] rounded-sm text-white text-[12px] font-medium flex items-center pl-[9px]">
                    <svg viewBox="0 0 12 12" class="w-[12px] h-[12px]"><path d="M2 2l8 8M10 2l-8 8" stroke="#fff" stroke-width="3.5"/></svg>
                    <span class="ml-[12px]">ĐÓNG</span>
                </button>
            </div>
        </div>
    </div>
</div>
</body>
</html>
